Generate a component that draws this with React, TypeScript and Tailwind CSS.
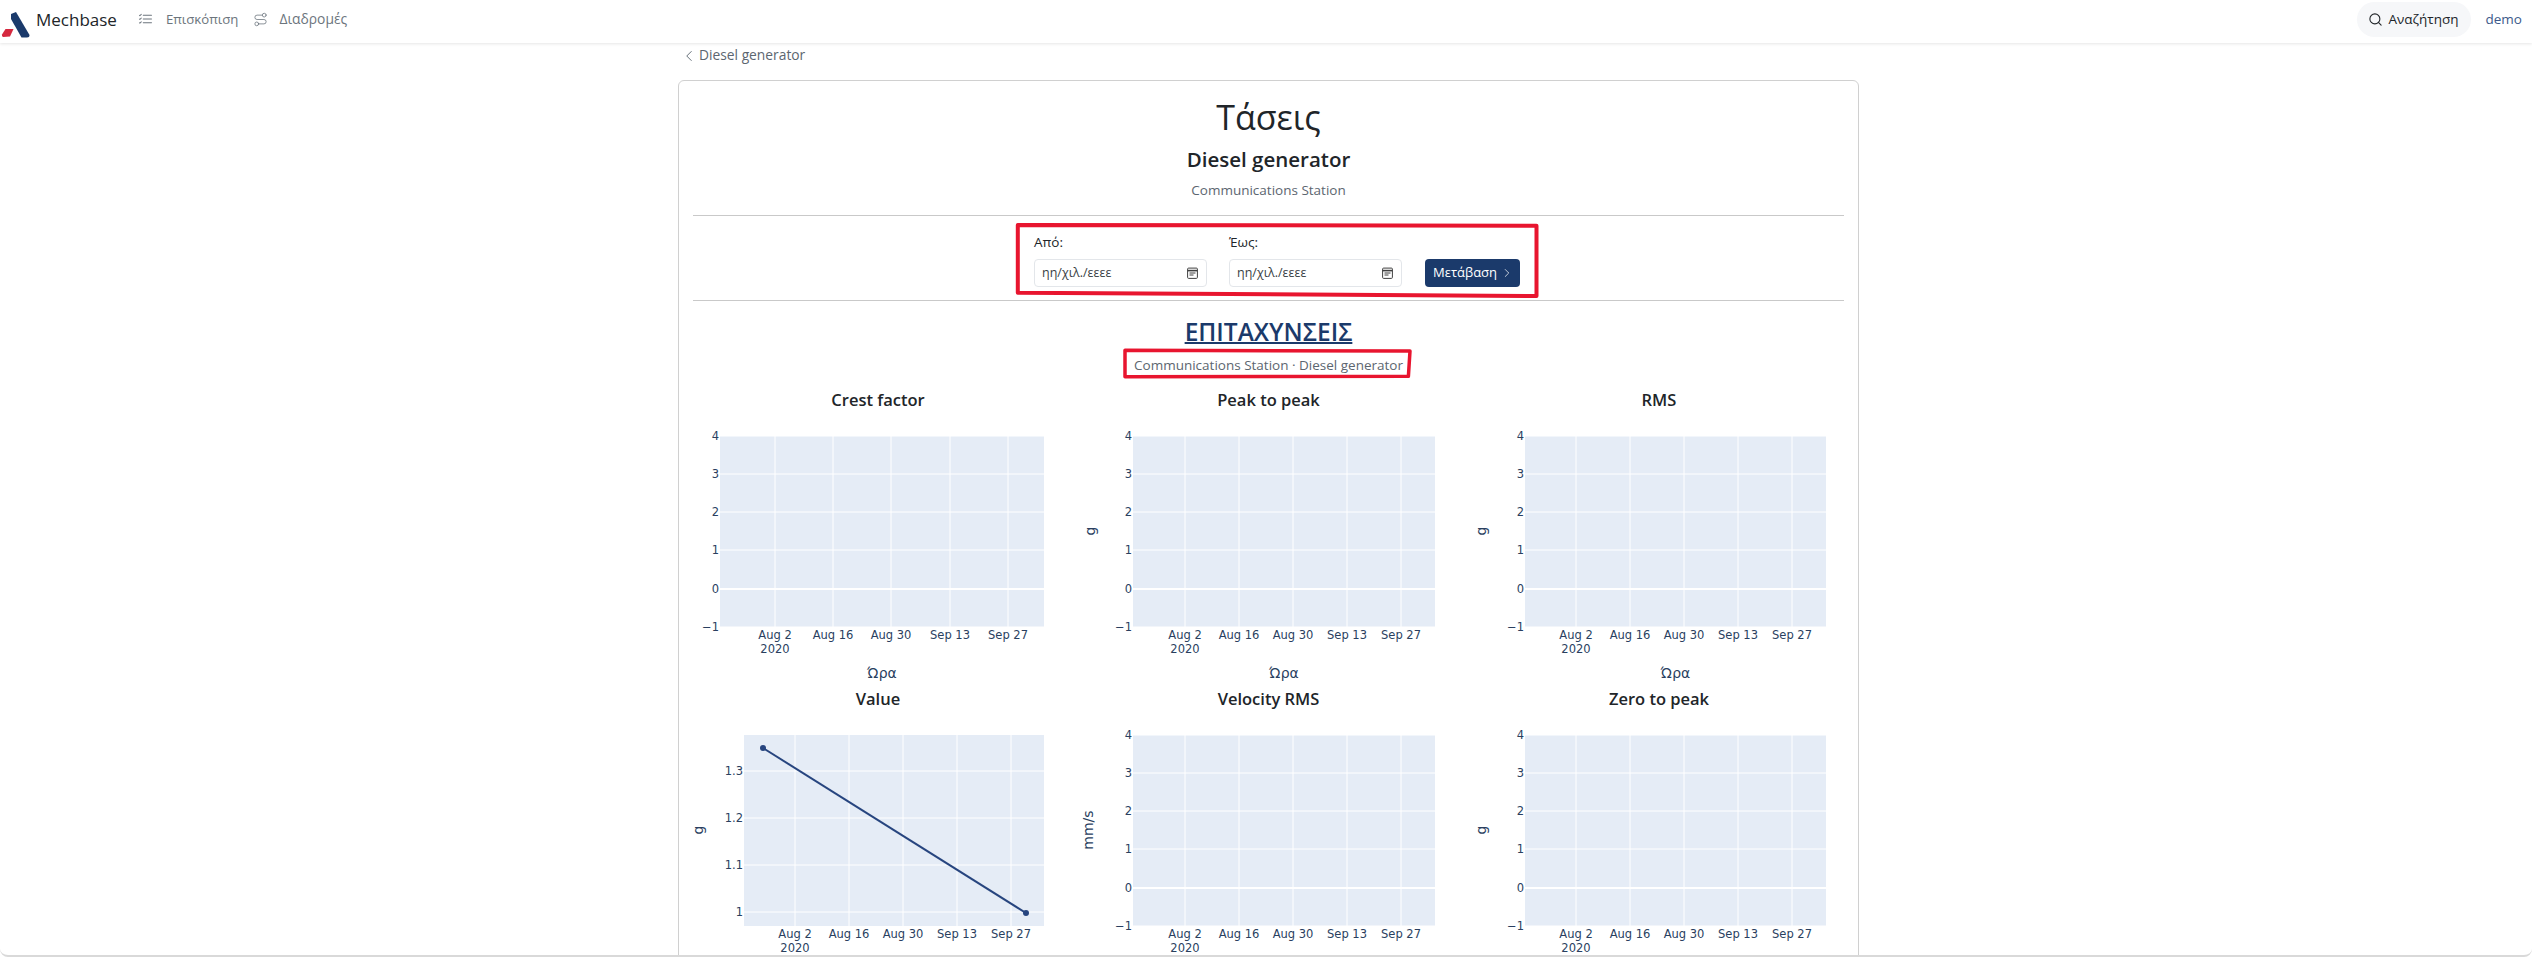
import { ChevronLeft, ChevronRight, Route, Search } from "lucide-react";
import { BsListCheck } from "react-icons/bs";

const UI_FONT = "font-['Open_Sans','Noto_Sans',sans-serif]";

const TICK_FILL = "#2a3f5f";
const PLOT_BG = "#e5ecf6";
const LINE_COLOR = "#27457f";

interface ChartProps {
  title: string;
  unit?: string;
  unitX?: number;
  left: number;
  right: number;
  gridX: number[];
  yTicks: { label: string; y: number; thick?: boolean }[];
  series?: { x: number; y: number }[];
  showXTitle?: boolean;
}

const X_LABELS = ["Aug 2", "Aug 16", "Aug 30", "Sep 13", "Sep 27"];

const EMPTY_TICKS = [
  { label: "4", y: 24 },
  { label: "3", y: 62 },
  { label: "2", y: 100 },
  { label: "1", y: 138 },
  { label: "0", y: 177, thick: true },
  { label: "−1", y: 215 },
];

const Chart = ({ title, unit, unitX = 22, left, right, gridX, yTicks, series, showXTitle = true }: ChartProps) => {
  const top = 24;
  const bottom = 215;

  return (
    <div>
      <h3 className="h-6 text-center text-[16.5px] leading-6 font-semibold text-[#212529]">
        {title}
      </h3>
      <svg width="100%" height="275" className="overflow-visible font-['DejaVu_Sans',sans-serif]">
        <rect x={left} y={top} width={right - left} height={bottom - top} fill={PLOT_BG} />

        {gridX.map((x) => (
          <line key={x} x1={x} x2={x} y1={top} y2={bottom} stroke="#fff" strokeWidth="1" />
        ))}
        {yTicks.map((t) => (
          <line
            key={t.label}
            x1={left}
            x2={right}
            y1={t.y}
            y2={t.y}
            stroke="#fff"
            strokeWidth={t.thick ? 2 : 1}
          />
        ))}

        {yTicks.map((t) => (
          <text key={t.label} x={left - 1} y={t.y + 4} textAnchor="end" fontSize="11.5" fill={TICK_FILL}>
            {t.label}
          </text>
        ))}
        {gridX.map((x, i) => (
          <text key={x} x={x} y={227} textAnchor="middle" fontSize="11.5" fill={TICK_FILL}>
            {X_LABELS[i]}
          </text>
        ))}
        <text x={gridX[0]} y={241} textAnchor="middle" fontSize="11.5" fill={TICK_FILL}>
          2020
        </text>
        {showXTitle && (
          <text x={(left + right) / 2} y={266} textAnchor="middle" fontSize="14" fill={TICK_FILL}>
            Ώρα
          </text>
        )}

        {unit && (
          <text
            x={unitX}
            y={119}
            textAnchor="middle"
            fontSize="14"
            fill={TICK_FILL}
            transform={`rotate(-90 ${unitX} 119)`}
          >
            {unit}
          </text>
        )}

        {series && (
          <>
            <polyline
              points={series.map((p) => `${p.x},${p.y}`).join(" ")}
              fill="none"
              stroke={LINE_COLOR}
              strokeWidth="2"
            />
            {series.map((p) => (
              <circle key={p.x} cx={p.x} cy={p.y} r="3" fill={LINE_COLOR} />
            ))}
          </>
        )}
      </svg>
    </div>
  );
};

const DateField = ({ label }: { label: string }) => (
  <div className="w-[173px] shrink-0">
    <div className="h-5 text-[13.5px] leading-5 text-[#212529]">{label}</div>
    <div className="mt-[7px] flex h-7 items-center justify-between rounded border border-[#e3e6ea] bg-white pr-[8px] pl-[7px] text-[12.5px] text-[#3a3f45]">
      <span>ηη/χιλ./εεεε</span>
      <svg width="11" height="12" viewBox="0 0 11 12" fill="none" stroke="#3f3f3f">
        <rect x="0.6" y="1.1" width="9.8" height="10.3" rx="1" />
        <path d="M0.6 3.6h9.8" strokeWidth="1.6" />
        <path d="M2.5 6h6M2.5 8h4" strokeWidth="1" />
      </svg>
    </div>
  </div>
);

export default function App() {
  return (
    <div className={`h-[957px] overflow-hidden rounded-b-lg border-b-2 border-[#d9d9d9] bg-white ${UI_FONT}`}>
      <header className="relative z-10 flex h-[43px] items-center justify-between bg-white pr-[10px] pb-[4px] shadow-[0_1px_3px_rgba(0,0,0,0.1)]">
        <div className="flex items-center">
          <svg width="32" height="36" viewBox="0 0 32 36" className="mt-[6px]">
            <path d="M11 9 L16 7 L29.5 30 Q29.5 32.5 27 32.5 L21.5 32.5 L11 14 Z" fill="#1b3a6b" />
            <path d="M5.5 24 L13.5 24 L10 31.5 L3 32 Q1.5 31 2 29.5 Z" fill="#d5293f" />
          </svg>
          <span className="ml-[4px] text-[17px] text-[#212529]">Mechbase</span>
          <div className="ml-[21px] flex items-center text-[13.2px] text-[#6c757d]">
            <BsListCheck className="h-[15px] w-[15px]" />
            <span className="ml-[13px]">Επισκόπιση</span>
            <Route className="ml-[15px] h-[15px] w-[15px]" strokeWidth={1.25} />
            <span className="ml-[11px] text-[13.8px]">Διαδρομές</span>
          </div>
        </div>
        <div className="flex items-center">
          <div className="flex h-[35px] w-[114px] items-center justify-center gap-[5px] rounded-full bg-[#f6f7f9] text-[13.5px] text-[#212529]">
            <Search className="h-[15px] w-[15px]" strokeWidth={1.75} />
            Αναζήτηση
          </div>
          <span className="ml-[15px] text-[13.5px] text-[#3d5a8a]">demo</span>
        </div>
      </header>

      <main className="ml-[678px] w-[1181px]">
        <div className="flex h-[37px] items-center pb-[12px] pl-[2px] text-[13.8px] text-[#5c6670]">
          <ChevronLeft className="h-[18px] w-[18px]" strokeWidth={1.25} />
          <span className="ml-[1px]">Diesel generator</span>
        </div>

        <section className="rounded-md border-[1.5px] border-[#d0d0d0] pt-[12px]">
          <div className="text-center">
            <h1 className="h-[48px] text-[34px] leading-[48px] font-medium text-[#212529]">Τάσεις</h1>
            <h2 className="mt-[4px] h-7 text-[20.5px] leading-7 font-semibold text-[#212529]">Diesel generator</h2>
            <p className="mt-[7px] h-5 text-[13.5px] leading-5 text-[#5c6670]">Communications Station</p>
          </div>

          <div className="mt-[15px] mx-[14px] border-y border-[#c9c9c9] pt-4 pb-[13px] pl-[341px]">
            <div className="relative flex w-[486px] items-end">
              <DateField label="Από:" />
              <div className="ml-[22px]">
                <DateField label="Έως:" />
              </div>
              <button className="ml-[23px] flex h-7 w-[95px] shrink-0 items-center justify-between rounded bg-[#1b3a6b] pr-[6px] pl-[8px] text-[13px] text-white">
                Μετάβαση
                <ChevronRight className="h-[14px] w-[14px]" strokeWidth={1.25} />
              </button>
              <svg width="526" height="75" className="pointer-events-none absolute top-[-9px] left-[-19px]" fill="none">
                <polygon points="2.8,2 521.5,2.7 521.5,73 2.8,69.7" stroke="#e8152f" strokeWidth="4" strokeLinejoin="round" />
              </svg>
            </div>
          </div>

          <div className="mt-[15px] text-center">
            <h2 className="h-8 text-[24.5px] leading-8 font-semibold text-[#1b3a6b] underline decoration-2">ΕΠΙΤΑΧΥΝΣΕΙΣ</h2>
            <p className="relative mx-auto mt-[7px] h-5 w-[271px] text-[13.5px] leading-5 whitespace-nowrap text-[#5c6670]">
              Communications Station · Diesel generator
              <svg width="291" height="31" className="pointer-events-none absolute top-[-7px] left-[-11px]" fill="none">
                <polygon points="3,2.3 288,3 286.4,28.3 3,28.7" stroke="#e8152f" strokeWidth="3.5" strokeLinejoin="round" />
              </svg>
            </p>
          </div>

          <div className="mt-[13px] ml-[4px] grid w-[1171px] grid-cols-[390px_391px_390px]">
            <Chart title="Crest factor" left={37} right={361} gridX={[92, 150, 208, 267, 325]} yTicks={EMPTY_TICKS} />
            <Chart title="Peak to peak" unit="g" left={60} right={362} gridX={[112, 166, 220, 274, 328]} yTicks={EMPTY_TICKS} />
            <Chart title="RMS" unit="g" left={61} right={362} gridX={[112, 166, 220, 274, 328]} yTicks={EMPTY_TICKS} />
            <Chart
              title="Value"
              unit="g"
              unitX={20}
              left={61}
              right={361}
              gridX={[112, 166, 220, 274, 328]}
              yTicks={[
                { label: "1.3", y: 60 },
                { label: "1.2", y: 107 },
                { label: "1.1", y: 154 },
                { label: "1", y: 201 },
              ]}
              series={[
                { x: 80, y: 37 },
                { x: 343, y: 202 },
              ]}
              showXTitle={false}
            />
            <Chart title="Velocity RMS" unit="mm/s" unitX={20} left={60} right={362} gridX={[112, 166, 220, 274, 328]} yTicks={EMPTY_TICKS} showXTitle={false} />
            <Chart title="Zero to peak" unit="g" left={61} right={362} gridX={[112, 166, 220, 274, 328]} yTicks={EMPTY_TICKS} showXTitle={false} />
          </div>
        </section>
      </main>
    </div>
  );
}
